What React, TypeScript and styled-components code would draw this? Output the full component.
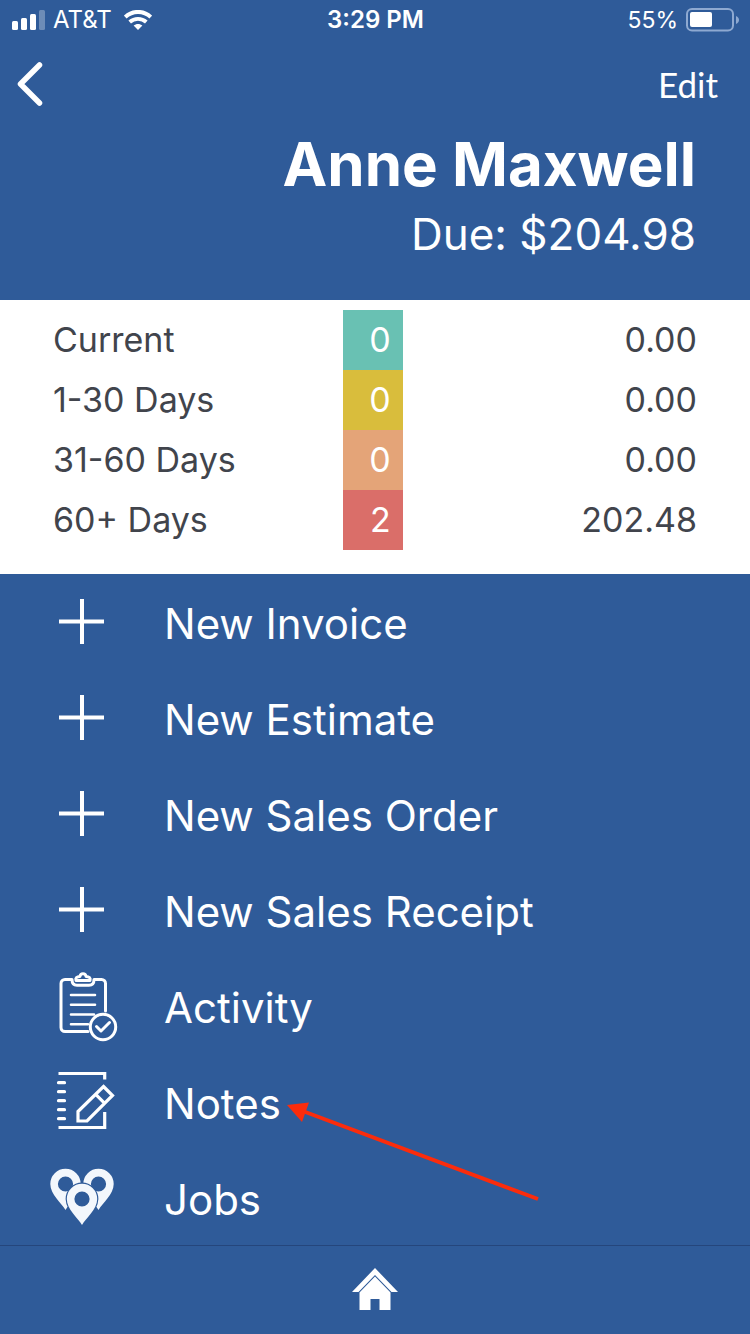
import React from "react";
import styled, { createGlobalStyle } from "styled-components";

const GlobalStyle = createGlobalStyle`
  *, *::before, *::after { box-sizing: border-box; }
  body {
    margin: 0;
    background: #2f5b99;
    color: #fff;
    font-family: Inter, "Liberation Sans", sans-serif;
  }
  button, a { font: inherit; color: inherit; }
`;

const Page = styled.div`
  min-height: 100vh;
  display: flex;
  flex-direction: column;
`;

const StatusBar = styled.div`
  display: grid;
  grid-template-columns: 1fr auto 1fr;
  align-items: center;
  height: 40px;
  padding: 0 11px 0 12px;
  font-size: 24px;
  line-height: 40px;
`;

const StatusGroup = styled.div<{ $end?: boolean }>`
  display: flex;
  align-items: center;
  gap: 8px;
  justify-content: ${(p) => (p.$end ? "flex-end" : "flex-start")};

  svg { display: block; flex: none; }
`;

const Carrier = styled.span`
  padding-right: 4px;
`;

const BatteryLevel = styled.span`
  font-size: 23px;
`;

const Clock = styled.time`
  font-weight: 600;
`;

const NavBar = styled.nav`
  display: flex;
  justify-content: space-between;
  align-items: center;
  height: 88px;
  padding: 0 32px 0 16px;
`;

const NavButton = styled.button`
  padding: 0;
  border: 0;
  background: none;
  cursor: pointer;
  font-family: Lato, "Liberation Sans", sans-serif;
  font-size: 35px;
  font-weight: 400;
  line-height: 48px;

  svg { display: block; }
`;

const CustomerHeader = styled.header`
  height: 172px;
  padding: 0 54px;
  text-align: right;
`;

const CustomerName = styled.h1`
  margin: 0;
  font-size: 60px;
  font-weight: 700;
  line-height: 72px;
`;

const AmountDue = styled.p`
  margin: 0;
  font-size: 44px;
  line-height: 68px;
`;

const AgingPanel = styled.section`
  padding: 10px 53px 24px;
  background: #fff;
  color: #41444c;
`;

const AgingTable = styled.table`
  width: 100%;
  table-layout: fixed;
  border-collapse: collapse;
  font-size: 34px;
  line-height: 60px;
`;

const AgingLabel = styled.th`
  width: 45%;
  padding: 0;
  font-weight: 400;
  text-align: left;
`;

const AgingCount = styled.td<{ $color: string }>`
  width: 60px;
  padding: 0 12px 0 0;
  background: ${(p) => p.$color};
  color: #fff;
  text-align: right;
`;

const AgingAmount = styled.td`
  padding: 0;
  text-align: right;
`;

const Menu = styled.ul`
  flex: 1;
  margin: 0;
  padding: 0;
  list-style: none;
`;

const MenuItem = styled.li`
  position: relative;
`;

const MenuButton = styled.button`
  display: flex;
  align-items: center;
  width: 100%;
  height: 96px;
  padding: 2px 24px 0 0;
  border: 0;
  background: none;
  text-align: left;
  font-size: 42px;
  cursor: pointer;
`;

const MenuIcon = styled.span`
  flex: none;
  width: 164px;
  padding-left: 46px;

  svg { display: block; }
`;

const Pointer = styled.svg`
  position: absolute;
  z-index: 1;
  top: 48px;
  left: 287px;
  pointer-events: none;
`;

const TabBar = styled.nav`
  display: flex;
  justify-content: center;
  align-items: center;
  height: 89px;
  margin-top: -1px;
  border-top: 1px solid #25467c;
`;

const HomeLink = styled.a`
  display: block;
  svg { display: block; }
`;

const SignalIcon = () => (
  <svg width="33" height="22" viewBox="0 0 33 22" fill="#fff" aria-hidden="true">
    <rect x="0" y="12" width="6" height="9" rx="1.5" />
    <rect x="9" y="9" width="6" height="12" rx="1.5" />
    <rect x="18" y="5" width="6" height="16" rx="1.5" />
    <rect x="27" y="1" width="6" height="20" rx="1.5" opacity="0.3" />
  </svg>
);

const WifiIcon = () => (
  <svg width="28" height="20" viewBox="0 0 28 20" aria-hidden="true">
    <path d="M1.2 7C8.5 0.200 19.5 0.200 26.8 7" fill="none" stroke="#fff" strokeWidth="4" />
    <path d="M5.700 12c4.700-4.300 11.900-4.300 16.600 0" fill="none" stroke="#fff" strokeWidth="3.800" />
    <path d="M9.6 15.6c2.6-2.3 6.2-2.3 8.8 0L14 20z" fill="#fff" />
  </svg>
);

const BatteryIcon = () => (
  <svg width="53" height="24" viewBox="0 0 53 24" aria-hidden="true">
    <rect x="1" y="1" width="46" height="21.5" rx="5" fill="none" stroke="#8ea9d1" strokeWidth="2" />
    <rect x="4" y="4" width="22" height="15" rx="2" fill="#fff" />
    <path d="M50 8c4 1.500 4 6.500 0 8z" fill="#8ea9d1" />
  </svg>
);

const BackIcon = () => (
  <svg width="30" height="46" viewBox="0 0 30 46" aria-hidden="true">
    <path d="M23.500 4 4.500 23l19 19" fill="none" stroke="#fff" strokeWidth="5.500" strokeLinecap="round" strokeLinejoin="round" />
  </svg>
);

const PlusIcon = () => (
  <svg width="72" height="72" viewBox="0 0 72 72" aria-hidden="true">
    <path d="M13 34.500h45M36 12v45" stroke="#fff" strokeWidth="4" />
  </svg>
);

const ActivityIcon = () => (
  <svg width="72" height="72" viewBox="0 0 72 72" fill="none" stroke="#fff" strokeWidth="3" strokeLinecap="round" strokeLinejoin="round" aria-hidden="true">
    <path d="M42 60.500H19a4 4 0 0 1-4-4V12.500a4 4 0 0 1 4-4H26c0 4 1.500 5.800 5 5.800h12c3.500 0 5-1.800 5-5.800h7.500a4 4 0 0 1 4 4V40" />
    <path d="M30 9.500c-.8-2.600.8-4.100 4-4.100C34.500 2 39.500 2 40 5.400c3.200 0 4.800 1.500 4 4.100z" />
    <path d="M25 24H49M25 33.700H49M25 43.500H48M25 53.300H42" strokeWidth="2.600" />
    <circle cx="57" cy="56" r="12.700" />
    <path d="m50.500 55.500 4.500 4.500 8.500-8.500" />
  </svg>
);

const NotesIcon = () => (
  <svg width="72" height="72" viewBox="0 0 72 72" fill="none" stroke="#fff" strokeWidth="3.200" aria-hidden="true">
    <path d="M12.500 6.500H58.700V12.500M12.500 60.500H58.700V45" />
    <path d="M12.500 15.700h6M12.500 24.700h6M12.500 33.700h6M12.500 42.700h6M12.500 51.700h6" strokeLinecap="round" />
    <path d="M57.500 19.500 66.500 28.500 41 54H32V44.500zM49.700 27.300l9 9" />
  </svg>
);

const JobsIcon = () => {
  const body = "M0 26C-4 19-15.200 10.500-15.200 0a15.200 15.200 0 0 1 30.400 0C15.200 10.500 4 19 0 26z";
  const pin = `${body}M0-7.600a7.600 7.600 0 1 0 0 15.200 7.600 7.600 0 0 0 0-15.200z`;
  return (
    <svg width="72" height="72" viewBox="0 0 72 72" fill="#f3f7fc" fillRule="evenodd" aria-hidden="true">
      <path d={pin} transform="translate(19.500 21)" />
      <path d={pin} transform="translate(52.500 21)" />
      <path d={body} transform="translate(36 36)" fill="#2f5b99" stroke="#2f5b99" strokeWidth="2.400" />
      <path d={pin} transform="translate(36 36)" />
    </svg>
  );
};

const HomeIcon = () => (
  <svg width="46" height="44" viewBox="0 0 46 44" fill="#fff" aria-hidden="true">
    <path d="M0 24 23 0l23 24h-6.500L23 7 6.500 24z" />
    <path d="M7.500 24.500 23 8.500l15.500 16V42H27.500V31h-9v11h-11z" />
  </svg>
);

const aging = [
  { label: "Current", count: 0, amount: "0.00", color: "#69c1b3" },
  { label: "1-30 Days", count: 0, amount: "0.00", color: "#d9bd3c" },
  { label: "31-60 Days", count: 0, amount: "0.00", color: "#e4a478" },
  { label: "60+ Days", count: 2, amount: "202.48", color: "#da6e69" },
];

const menu = [
  { label: "New Invoice", Icon: PlusIcon },
  { label: "New Estimate", Icon: PlusIcon },
  { label: "New Sales Order", Icon: PlusIcon },
  { label: "New Sales Receipt", Icon: PlusIcon },
  { label: "Activity", Icon: ActivityIcon },
  { label: "Notes", Icon: NotesIcon, marked: true },
  { label: "Jobs", Icon: JobsIcon },
];

export default function App() {
  return (
    <Page>
      <GlobalStyle />
      <StatusBar>
        <StatusGroup>
          <SignalIcon />
          <Carrier>AT&amp;T</Carrier>
          <WifiIcon />
        </StatusGroup>
        <Clock>3:29 PM</Clock>
        <StatusGroup $end>
          <BatteryLevel>55%</BatteryLevel>
          <BatteryIcon />
        </StatusGroup>
      </StatusBar>
      <NavBar>
        <NavButton type="button" aria-label="Back">
          <BackIcon />
        </NavButton>
        <NavButton type="button">Edit</NavButton>
      </NavBar>
      <CustomerHeader>
        <CustomerName>Anne Maxwell</CustomerName>
        <AmountDue>Due: $204.98</AmountDue>
      </CustomerHeader>
      <AgingPanel>
        <AgingTable>
          <tbody>
            {aging.map((row) => (
              <tr key={row.label}>
                <AgingLabel scope="row">{row.label}</AgingLabel>
                <AgingCount $color={row.color}>{row.count}</AgingCount>
                <AgingAmount>{row.amount}</AgingAmount>
              </tr>
            ))}
          </tbody>
        </AgingTable>
      </AgingPanel>
      <Menu>
        {menu.map(({ label, Icon, marked }) => (
          <MenuItem key={label}>
            <MenuButton type="button">
              <MenuIcon>
                <Icon />
              </MenuIcon>
              {label}
            </MenuButton>
            {marked && (
              <Pointer width="256" height="102" viewBox="0 0 256 102" aria-hidden="true">
                <path d="M251 97 17 9.500" stroke="#fb2c0c" strokeWidth="4" />
                <path d="M0 3 22 0.500 15 20z" fill="#fb2c0c" />
              </Pointer>
            )}
          </MenuItem>
        ))}
      </Menu>
      <TabBar>
        <HomeLink href="#home" aria-label="Home">
          <HomeIcon />
        </HomeLink>
      </TabBar>
    </Page>
  );
}
